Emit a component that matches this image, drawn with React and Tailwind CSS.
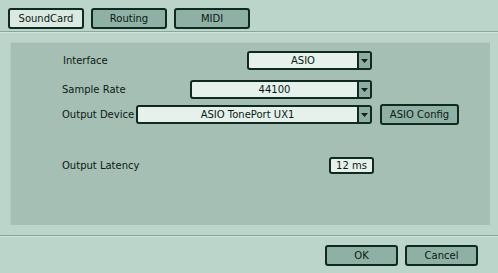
const font = { fontFamily: '"DejaVu Sans", Verdana, sans-serif' };

const Arrow = () => (
  <svg width="7" height="4" viewBox="0 0 7 4">
    <path d="M0 0h7L3.5 4z" fill="#0d241c" />
  </svg>
);

const Dropdown = ({ value, width }) => (
  <div className={`flex h-[19px] ${width} rounded-[3px] border-2 border-[#0e2a21] bg-[#e6f1ec]`}>
    <div className="flex flex-1 items-center justify-center text-[10px] text-[#0b1a14]">{value}</div>
    <div className="flex w-[13px] items-center justify-center border-l-2 border-[#0e2a21] bg-[#8fada3]">
      <Arrow />
    </div>
  </div>
);

const Tab = ({ label, active }) => (
  <div
    className={`flex h-[21px] w-[76px] items-center justify-center rounded-[3px] border-2 border-[#0e2a21] text-[10px] text-[#0b1a14] ${
      active ? 'bg-[#dbe9e3]' : 'bg-[#8fb0a4]'
    }`}
  >
    {label}
  </div>
);

const Button = ({ label, width = 'w-[73px]' }) => (
  <div
    className={`flex h-[21px] ${width} items-center justify-center rounded-[3px] border-2 border-[#0e2a21] bg-[#8fb0a4] text-[10px] text-[#0b1a14]`}
  >
    {label}
  </div>
);

export default function App() {
  return (
    <div className="h-[273px] w-[498px] overflow-hidden bg-[#bcd5ca]" style={font}>
      <div className="flex gap-[7px] pl-[8px] pt-[8px]">
        <Tab label="SoundCard" active />
        <Tab label="Routing" />
        <Tab label="MIDI" />
      </div>
      <div className="mt-[2px] h-px bg-[#8aa79a]" />
      <div className="h-px bg-[#d2e4dc]" />

      <div className="ml-[10px] mt-[9px] h-[183px] w-[480px] border-l border-t border-[#b3cbc1] bg-[#a6bfb5] pt-[8px]">
        <div className="flex w-[361px] items-center pl-[52px]">
          <span className="text-[10px] text-[#0b1a14]">Interface</span>
          <div className="ml-auto">
            <Dropdown value="ASIO" width="w-[125px]" />
          </div>
        </div>
        <div className="mt-[10px] flex w-[361px] items-center pl-[51px]">
          <span className="text-[10px] text-[#0b1a14]">Sample Rate</span>
          <div className="ml-auto">
            <Dropdown value="44100" width="w-[182px]" />
          </div>
        </div>
        <div className="mt-[5px] flex items-center">
          <div className="flex w-[361px] items-center pl-[51px]">
            <span className="text-[10px] text-[#0b1a14]">Output Device</span>
            <div className="ml-auto">
              <Dropdown value="ASIO TonePort UX1" width="w-[236px]" />
            </div>
          </div>
          <div className="ml-[8px]">
            <Button label="ASIO Config" width="w-[79px]" />
          </div>
        </div>
        <div className="mt-[32px] flex w-[363px] items-center pl-[51px]">
          <span className="text-[10px] text-[#0b1a14]">Output Latency</span>
          <div className="ml-auto flex h-[17px] w-[45px] items-center justify-center rounded-[3px] border-2 border-[#0e2a21] bg-[#e6f1ec] text-[10px] text-[#0b1a14]">
            12 ms
          </div>
        </div>
      </div>

      <div className="mt-[10px] h-px bg-[#86a395]" />
      <div className="h-px bg-[#d2e4dc]" />
      <div className="flex justify-end gap-[7px] pr-[20px] pt-[8px]">
        <Button label="OK" />
        <Button label="Cancel" />
      </div>
    </div>
  );
}
